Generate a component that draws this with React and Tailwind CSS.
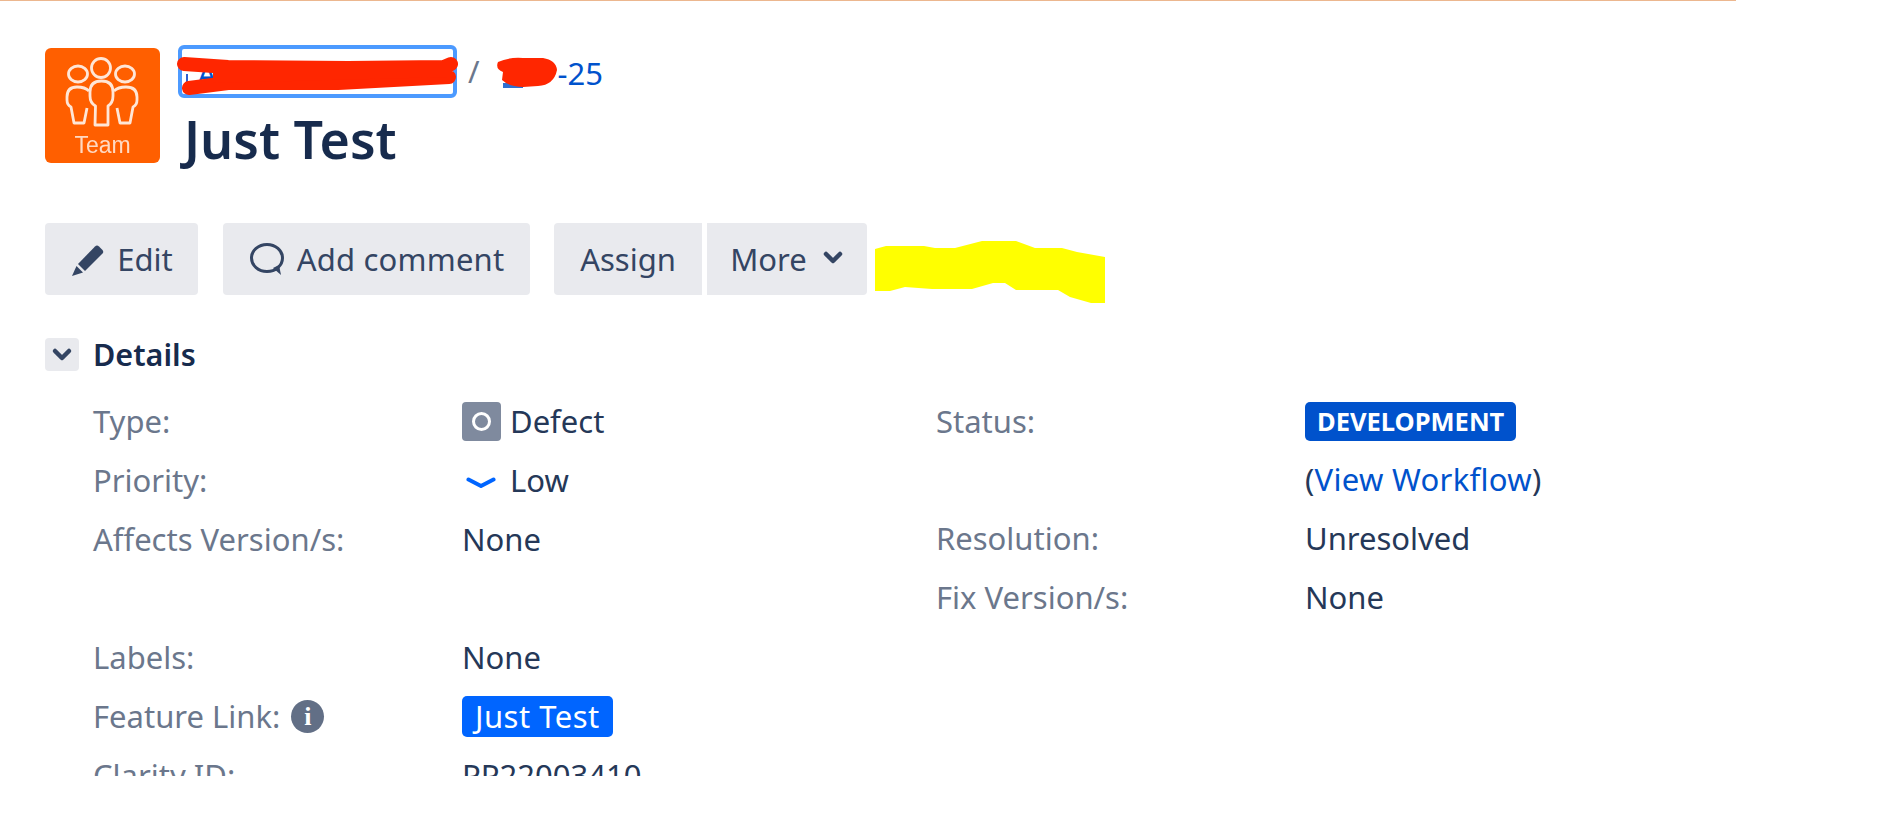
import React from 'react';

const font = { fontFamily: '"Noto Sans", sans-serif' };

function TeamAvatar() {
  return (
    <div className="w-[115px] h-[115px] shrink-0 rounded-[6px] bg-[#ff5f00]">
      <svg viewBox="0 0 115 115" className="w-full h-full blur-[0.4px]">
        <g fill="none" stroke="#ffe6d6" strokeWidth="2.800" strokeLinejoin="round">
          <circle cx="56" cy="20" r="9.500" />
          <ellipse cx="33" cy="26" rx="9.500" ry="8" />
          <ellipse cx="80" cy="26" rx="9.500" ry="8" />
          <path d="M50 77 50.500 58Q45 55 45 48V44Q45 33 56.500 33T68 44V48Q68 55 63 58V77Z" />
          <path d="M44 43Q40 39 32 39Q22 39 22 49V52Q22 57 26 59L29 75H39L42 60" />
          <path d="M69 43Q73 39 81 39Q92 39 92 49V52Q92 57 88 59L85 75H75L72 60" />
        </g>
        <text x="57.500" y="105" textAnchor="middle" fontSize="23" fill="#ffd9c2" style={{ fontFamily: '"Liberation Sans", sans-serif' }}>Team</text>
      </svg>
    </div>
  );
}

function PencilIcon() {
  return (
    <svg viewBox="0 0 34 36" className="w-[34px] h-[36px]">
      <path d="M8 23 25 5.500Q27 3.500 29 5.500L32.500 9Q34 11 32.500 12.500L15 30Z" fill="#344563" />
      <path d="M6.500 25 13 31.500 2 35Z" fill="#344563" />
    </svg>
  );
}

function CommentIcon() {
  return (
    <svg viewBox="0 0 36 34" className="w-[36px] h-[34px]">
      <ellipse cx="18" cy="16" rx="15.500" ry="13.500" fill="none" stroke="#344563" strokeWidth="3" />
      <path d="M24 26 32 33 30 23Z" fill="#344563" />
    </svg>
  );
}

function Chevron({ className }) {
  return (
    <svg viewBox="0 0 22 15" className={className}>
      <path d="M4 4 11 11 18 4" fill="none" stroke="#344563" strokeWidth="4.500" strokeLinecap="round" strokeLinejoin="round" />
    </svg>
  );
}

function Row({ label, children }) {
  return (
    <div className="flex h-[59px] items-center">
      <div className="w-[369px] shrink-0 flex items-center gap-[11px] text-[#6b778c]">{label}</div>
      <div className="flex items-center text-[#253858]">{children}</div>
    </div>
  );
}

export default function App() {
  return (
    <div className="relative w-[1898px] h-[822px] overflow-hidden bg-white text-[31px]" style={font}>
      <div className="h-px w-[1736px] bg-[#ecb78f]" />

      <div className="flex items-start h-[115px] ml-[45px] mt-[47px] gap-[19px]">
        <TeamAvatar />
        <div className="flex flex-col">
          <div className="relative flex items-center h-[53px] -mt-[3px]">
            <div className="relative -ml-[1px] w-[279px] h-[53px] rounded-[6px] border-[4px] border-[#4c9aff] text-[#0052cc]">
              <span className="absolute left-[4px] top-[25px] w-[2px] h-[18px] bg-[#2f5fd0]" />
              <span className="absolute left-[15px] top-[2px]">A</span>
            </div>
            <span className="ml-[11px] text-[#6b778c]">/</span>
            <span className="ml-[78px] mt-[4px] text-[#0052cc]">-25</span>
            <svg viewBox="0 0 440 60" className="absolute -left-[1px] top-0 w-[440px] h-[60px] overflow-visible">
              <path d="M6 19 50 22 170 23 266 22 273 19M11 43 50 38 160 38 271 32" fill="none" stroke="#ff2600" strokeWidth="14" strokeLinecap="round" strokeLinejoin="round" />
              <path d="M35 24H270V32L35 38Z" fill="#ff2600" />
              <rect x="325" y="38" width="20" height="5" fill="#2f6fd0" />
              <path d="M320 17Q330 12 345 13H365Q378 15 379 25Q376 40 360 41L345 42Q330 41 324 35L325 27Q317 24 320 17Z" fill="#ff2600" />
            </svg>
          </div>
          <h1 className="ml-[5px] mt-[14px] text-[#172b4d] text-[52px] font-semibold leading-[54px]">Just Test</h1>
        </div>
      </div>

      <div className="relative flex pl-[45px] mt-[60px] h-[72px] text-[#344563]">
        <div className="flex items-center gap-[13px] w-[153px] justify-center rounded-[4px] bg-[#e9eaee]">
          <PencilIcon />
          <span>Edit</span>
        </div>
        <div className="flex items-center gap-[12px] w-[307px] ml-[25px] justify-center rounded-[4px] bg-[#e9eaee]">
          <CommentIcon />
          <span className="tracking-[0.2px]">Add comment</span>
        </div>
        <div className="flex items-center w-[148px] ml-[24px] justify-center rounded-l-[4px] bg-[#e9eaee]">Assign</div>
        <div className="flex items-center w-[160px] ml-[5px] gap-[15px] justify-center rounded-r-[4px] bg-[#e9eaee]">
          <span>More</span>
          <Chevron className="w-[22px] h-[15px] -mt-[3px]" />
        </div>
        <svg viewBox="0 0 232 62" className="absolute left-[875px] top-[18px] w-[232px] h-[62px]">
          <path d="M0 8 11 5H49L60 7H80L107 0H141L160 7H187L202 11 230 16V62H216L195 56 183 49H141L130 42H118L97 48H57L30 46 15 50H0Z" fill="#ffff00" />
        </svg>
      </div>

      <div className="flex items-center pl-[45px] mt-[43px] h-[33px] gap-[14px]">
        <div className="w-[34px] h-[33px] flex items-center justify-center rounded-[4px] bg-[#e9eaee]">
          <Chevron className="w-[22px] h-[15px]" />
        </div>
        <span className="text-[#172b4d] text-[30.500px] font-semibold">Details</span>
      </div>

      <div className="flex pl-[93px] mt-[21px] h-[384px] overflow-hidden">
        <div className="w-[843px] shrink-0">
          <Row label="Type:">
            <div className="w-[39px] h-[39px] mr-[9px] flex items-center justify-center rounded-[4px] bg-[#7f8a9e]">
              <div className="w-[19px] h-[19px] rounded-full border-[3px] border-white" />
            </div>
            Defect
          </Row>
          <Row label="Priority:">
            <svg viewBox="0 0 30 12" className="w-[30px] h-[12px] ml-[4px] mr-[14px] mt-[5px]">
              <path d="M2.500 2.500 15 9 27.500 2.500" fill="none" stroke="#0065ff" strokeWidth="4" strokeLinecap="round" strokeLinejoin="round" />
            </svg>
            Low
          </Row>
          <Row label="Affects Version/s:">None</Row>
          <div className="h-[59px]" />
          <Row label="Labels:">None</Row>
          <Row label={<>Feature Link:
            <span className="w-[33px] h-[33px] rounded-full bg-[#626f86] flex items-center justify-center text-white text-[26px] font-bold" style={{ fontFamily: '"Liberation Serif", serif' }}>i</span></>}>
            <span className="px-[13px] h-[41px] flex items-center rounded-[5px] bg-[#0065ff] text-white tracking-[0.5px]">Just Test</span>
          </Row>
          <Row label="Clarity ID:">PP22003410</Row>
        </div>
        <div>
          <div className="flex h-[59px] items-center">
            <div className="w-[369px] shrink-0 text-[#6b778c]">Status:</div>
            <span className="px-[12px] h-[39px] flex items-center rounded-[5px] bg-[#0052cc] text-white text-[25.500px] font-bold">DEVELOPMENT</span>
          </div>
          <div className="flex h-[57px] items-center">
            <div className="w-[369px] shrink-0" />
            <span className="text-[#253858] tracking-[0.3px]">(<span className="text-[#0052cc]">View Workflow</span>)</span>
          </div>
          <div className="flex h-[61px] items-center">
            <div className="w-[369px] shrink-0 text-[#6b778c]">Resolution:</div>
            <span className="text-[#253858]">Unresolved</span>
          </div>
          <div className="flex h-[57px] items-center">
            <div className="w-[369px] shrink-0 text-[#6b778c]">Fix Version/s:</div>
            <span className="text-[#253858]">None</span>
          </div>
        </div>
      </div>
    </div>
  );
}
